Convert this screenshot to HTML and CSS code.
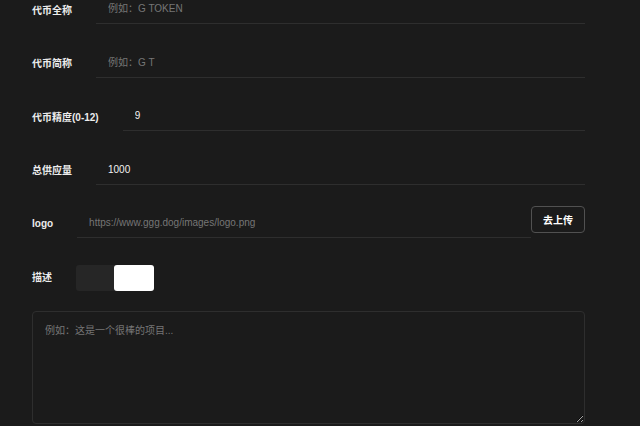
FILE: index.html
```html
<!DOCTYPE html>
<html lang="zh-CN">
<head>
    <meta charset="UTF-8">
    <meta name="viewport" content="width=device-width, initial-scale=1.0">
    <title>创建代币</title>
    <link rel="stylesheet" href="styles.css">
</head>
<body>

<div class="form">
    <div class="row">
        <label class="label">代币全称</label>
        <input class="field" type="text" placeholder="例如：G TOKEN">
    </div>
    <div class="row">
        <label class="label">代币简称</label>
        <input class="field" type="text" placeholder="例如：G T">
    </div>
    <div class="row">
        <label class="label">代币精度(0-12)</label>
        <input class="field" type="text" value="9">
    </div>
    <div class="row">
        <label class="label">总供应量</label>
        <input class="field" type="text" value="1000">
    </div>
    <div class="row row-logo">
        <label class="label">logo</label>
        <input class="field" type="text" placeholder="https://www.ggg.dog/images/logo.png">
        <button class="upload">去上传</button>
    </div>
    <div class="row">
        <label class="label">描述</label>
        <div class="switch">
            <span class="switch-off"></span>
            <span class="switch-on"></span>
        </div>
    </div>
    <textarea class="desc" placeholder="例如：这是一个很棒的项目..."></textarea>
</div>

</body>
</html>
```

FILE: styles.css
```css
body { margin: 0; background-color: #1b1b1b; color: #ededed; font-family: "Liberation Sans", "Noto Sans CJK SC", sans-serif; font-size: 10px; overflow: hidden; }
.form { width: 553px; padding-left: 32px; margin-top: -6px; }
.row { display: flex; align-items: center; height: 30px; margin-bottom: 23.5px; }
.label { font-size: 10px; font-weight: 600; margin-right: 24px; white-space: nowrap; color: #ececec; }
.field {
    flex: 1;
    height: 30px;
    box-sizing: border-box;
    background: transparent;
    border: none;
    border-bottom: 1px solid #2e2e2e;
    padding: 0 12px;
    color: #f2f2f2;
    font-family: inherit;
    font-size: 10px;
    outline: none;
}
.field::placeholder { color: #767676; }
.row-logo { align-items: flex-start; }
.row-logo .label { align-self: center; }
.upload {
    width: 54px;
    height: 27px;
    margin-top: -2px;
    background: transparent;
    border: 1px solid #515151;
    border-radius: 4px;
    color: #fff;
    font-family: inherit;
    font-size: 10px;
    font-weight: bold;
    cursor: pointer;
}
.switch { display: flex; width: 78px; height: 26px; background-color: #262626; border-radius: 3px; margin-top: 2px; }
.switch-off { width: 38px; }
.switch-on { flex: 1; background-color: #fff; border-radius: 3px; }
.desc {
    display: block;
    width: 553px;
    height: 113px;
    box-sizing: border-box;
    margin-top: -4px;
    padding: 10px 12px;
    background: transparent;
    border: 1px solid #2e2e2e;
    border-radius: 4px;
    color: #f2f2f2;
    font-family: inherit;
    font-size: 10px;
    outline: none;
}
.desc::placeholder { color: #767676; }
```
